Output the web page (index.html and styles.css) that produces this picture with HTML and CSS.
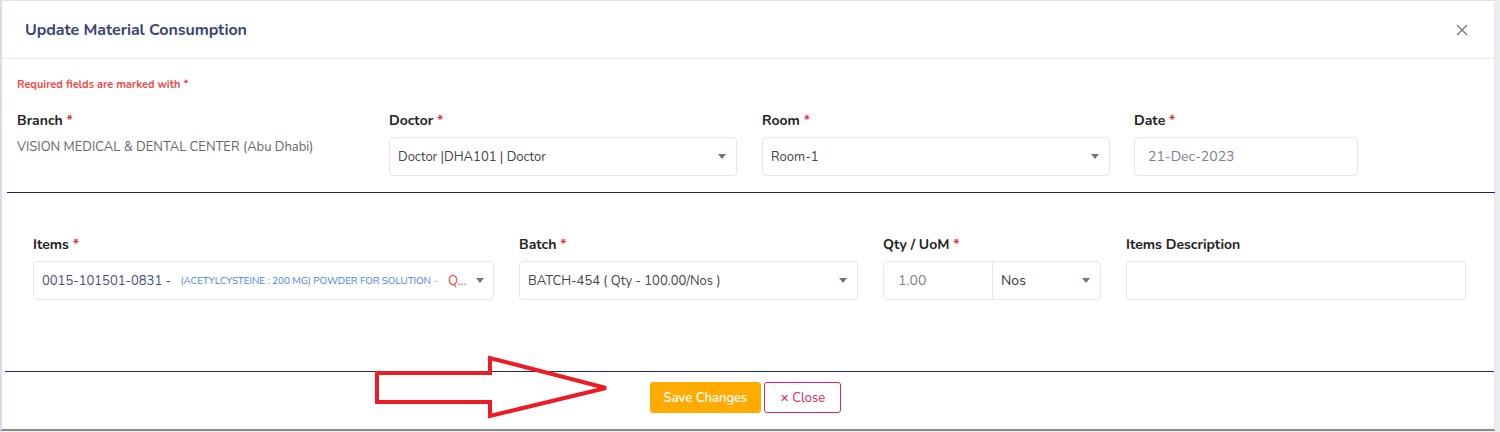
FILE: index.html
```html
<!DOCTYPE html>
<html>
<head>
<meta charset="utf-8">
<link rel="stylesheet" href="styles.css">
</head>
<body>
<div class="modal">
  <div class="modal-header">
    <h2 class="title">Update Material Consumption</h2>
    <span class="close-x" aria-label="Close">
      <svg width="12" height="12" viewBox="0 0 12 12"><path d="M1 1L11 11M11 1L1 11" stroke="#777" stroke-width="1.4" fill="none"/></svg>
    </span>
  </div>
  <div class="modal-body">
    <p class="req">Required fields are marked with *</p>
    <div class="row-top">
      <div class="field">
        <label class="lbl">Branch <span class="star">*</span></label>
        <div class="static">VISION MEDICAL &amp; DENTAL CENTER (Abu Dhabi)</div>
      </div>
      <div class="field">
        <label class="lbl">Doctor <span class="star">*</span></label>
        <div class="select w348"><span class="val">Doctor |DHA101 | Doctor</span><span class="caret"></span></div>
      </div>
      <div class="field">
        <label class="lbl">Room <span class="star">*</span></label>
        <div class="select w348"><span class="val">Room-1</span><span class="caret"></span></div>
      </div>
      <div class="field">
        <label class="lbl">Date <span class="star">*</span></label>
        <div class="input w224"><span class="muted">21-Dec-2023</span></div>
      </div>
    </div>
    <div class="sep"></div>
    <div class="row-items">
      <div class="field">
        <label class="lbl">Items <span class="star">*</span></label>
        <div class="select w461 item-sel"><span class="val item-val"><span class="code">0015-101501-0831 - </span><span class="desc">(ACETYLCYSTEINE : 200 MG) POWDER FOR SOLUTION - </span><span class="qred">Q...</span></span><span class="caret"></span></div>
      </div>
      <div class="field">
        <label class="lbl">Batch <span class="star">*</span></label>
        <div class="select w339"><span class="val">BATCH-454 ( Qty - 100.00/Nos )</span><span class="caret"></span></div>
      </div>
      <div class="field">
        <label class="lbl">Qty / UoM <span class="star">*</span></label>
        <div class="qty-group">
          <div class="input w110 qty"><span class="muted">1.00</span></div>
          <div class="select w108 uom"><span class="val nos">Nos</span><span class="caret"></span></div>
        </div>
      </div>
      <div class="field">
        <label class="lbl">Items Description</label>
        <div class="input w340"></div>
      </div>
    </div>
  </div>
  <div class="modal-footer">
    <button class="btn btn-save">Save Changes</button>
    <button class="btn btn-close"><span class="bx">✕</span> Close</button>
  </div>
  <svg class="arrow" width="240" height="70" viewBox="370 352 240 70">
    <polygon points="377,373 490,373 490,358 606,388 490,416 490,402 377,402" fill="none" stroke="#ed1c24" stroke-width="4" stroke-linejoin="miter"/>
  </svg>
</div>
</body>
</html>
```
FILE: styles.css
```css
* { box-sizing: border-box; }
html, body { margin: 0; padding: 0; }
body {
  width: 1500px;
  height: 432px;
  background: #eceef2;
  font-family: "Nunito", "Lato", "Noto Sans", sans-serif;
  color: #212529;
  overflow: hidden;
}
.modal {
  position: relative;
  width: 1495px;
  height: 431px;
  background: #fff;
  border-top: 1px solid #dfe2ea;
  border-left: 2px solid #d8dde9;
  border-right: 1px solid #dfe2ea;
  border-bottom: 2px solid #8a8a8a;
}
.modal-header {
  height: 58px;
  display: flex;
  align-items: center;
  justify-content: space-between;
  padding: 0 26px 0 23px;
  border-bottom: 1px solid #e6e8ef;
}
.title {
  margin: 0;
  font-size: 16px;
  font-weight: 700;
  color: #3a4373;
  letter-spacing: -0.05px;
}
.close-x { display: flex; }
.modal-body { padding: 0 0 0 3px; }
.req {
  margin: 19px 0 0 12px;
  font-size: 11px;
  font-weight: 700;
  color: #ef4a4a;
  line-height: 14px;
}
.row-top {
  display: grid;
  grid-template-columns: 372px 373px 372px 1fr;
  padding-left: 12px;
  margin-top: 20px;
}
.field { display: flex; flex-direction: column; }
.lbl {
  font-size: 14px;
  font-weight: 700;
  color: #222;
  line-height: 18px;
  margin-bottom: 7px;
}
.star { color: #e53935; }
.static {
  font-size: 13px;
  color: #666;
  line-height: 16px;
  margin-top: 2px;
}
.select, .input {
  height: 39px;
  border: 1px solid #e3e6ee;
  border-radius: 4px;
  display: flex;
  align-items: center;
  padding: 0 8px;
  background: #fff;
}
.select { justify-content: space-between; }
.val { font-size: 13px; color: #444; white-space: nowrap; overflow: hidden; }
.muted { font-size: 14px; color: #7b8190; padding-left: 1px; }
.caret {
  width: 0; height: 0;
  border-left: 4px solid transparent;
  border-right: 4px solid transparent;
  border-top: 5px solid #6b7588;
  margin-right: 2px;
  flex: none;
}
.w348 { width: 348px; }
.w224 { width: 224px; padding-left: 12px; }
.w461 { width: 461px; }
.w339 { width: 339px; }
.w110 { width: 110px; }
.w108 { width: 108px; }
.w340 { width: 340px; }
.sep {
  margin: 16px 0 0 2px;
  width: 1488px;
  border-top: 1px solid #1e2a5e;
}
.row-items {
  display: flex;
  gap: 25px;
  padding-left: 28px;
  margin-top: 43px;
}
.item-sel { padding-right: 7px; }
.item-val { display: flex; align-items: center; overflow: visible; }
.code { font-size: 13px; color: #4a4f7a; white-space: pre; }
.desc { font-size: 10px; color: #3d7ff0; margin-left: 6px; white-space: pre; letter-spacing: -0.1px; }
.qred { font-size: 13px; color: #ef4444; margin-left: 8px; }
.qty-group { display: flex; }
.qty { border-radius: 4px 0 0 4px; padding-left: 13px; }
.uom { border-left: none; border-radius: 0 4px 4px 0; padding-left: 8px; }
.nos { font-size: 14px; color: #333; }
.modal-footer {
  position: absolute;
  left: 3px; right: 0;
  top: 370px;
  border-top: 1px solid #1e2a5e;
  display: flex;
  justify-content: center;
  gap: 3px;
  padding-top: 10px;
  padding-right: 8px;
}
.btn {
  height: 31px;
  font-family: inherit;
  font-size: 13px;
  border-radius: 3px;
  padding: 0;
  cursor: pointer;
  white-space: nowrap;
}
.btn-save {
  background: #ffab00;
  border: 1px solid #ffab00;
  color: #fff;
  font-weight: 600;
  width: 111px;
}
.btn-close {
  background: #fff;
  border: 1px solid #e0245e;
  color: #e0245e;
  width: 77px;
}
.bx { font-size: 11px; }
.arrow {
  position: absolute;
  left: 368px;
  top: 351px;
}
```
